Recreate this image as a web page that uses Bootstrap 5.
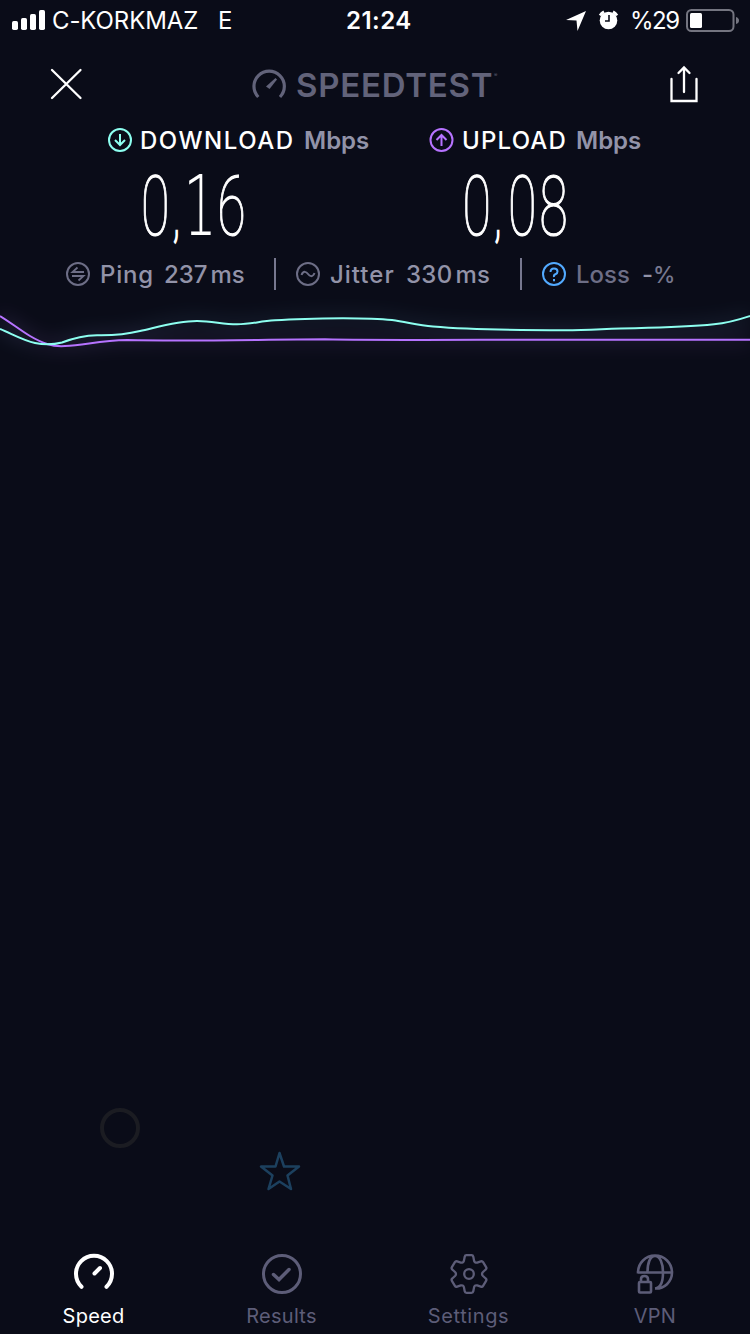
<!DOCTYPE html>
<html lang="en">
<head>
<meta charset="utf-8">
<meta name="viewport" content="width=device-width, initial-scale=1">
<title>Speedtest</title>
<link rel="stylesheet" href="https://cdn.jsdelivr.net/npm/bootstrap@5.3.0/dist/css/bootstrap.min.css">
<style>
:root{--ink:#0a0c18;--muted:#9293a8;--dim:#5d5d78;--logo:#62637a}
body{background:var(--ink);color:#fff;font-family:Inter,"Liberation Sans",sans-serif;overflow:hidden}
svg{display:block;flex:none;overflow:visible}
.screen{width:750px;height:1334px;position:relative}
.t{white-space:nowrap;flex:none;display:block}
.status{height:40px;font-size:24px;line-height:40px;padding-left:12px}
.status .t{line-height:42px}
.topbar{height:84px;padding:26px 51px 0 50px}
.readings{height:120px;padding-left:108px}
.reading{width:322px}
.lbl{font-size:24px;line-height:32px;font-weight:500}
.lbl .t{padding-top:2px}
.reading .lbl{height:32px}
.reading .lbl .t{padding-top:1px}
.unit{color:var(--muted);font-weight:600}
.digits{font-family:Roboto,sans-serif;font-weight:100;font-size:84px}
.digits .one{font-family:"DejaVu Sans",sans-serif;font-weight:200;font-size:84px}
.digits .comma{font-size:58px}
.stats{height:60px;padding-left:66px;color:var(--muted)}
.rule{width:2px;height:32px;background:#77788f;flex:none}
.tabs{height:94px;font-size:20px;line-height:24px;color:var(--dim)}
.tabs .tab{height:94px;padding-top:14px}
.tab .t{margin-top:10px;letter-spacing:.25px}
.ornament{height:840px;padding:748px 0 0 100px}
</style>
</head>
<body>
<div class="screen d-flex flex-column">
  <header class="status d-flex">
    <svg width="34" height="40" fill="#fff"><rect y="21" width="6" height="9" rx="1.7"/><rect x="9" y="18" width="6" height="12" rx="1.7"/><rect x="18" y="14" width="6" height="16" rx="1.7"/><rect x="27" y="10" width="6" height="20" rx="1.7"/></svg>
    <span class="t" style="width:171px;margin-left:6px;letter-spacing:-.1px">C-KORKMAZ</span>
    <span class="t" style="width:123px;margin-left:-6px;padding-left:1px">E</span>
    <span class="t fw-semibold" style="width:220px;margin-left:6px;letter-spacing:.5px">21:24</span>
    <svg width="64" height="40" viewBox="566 0 64 40"><path d="M566 20 586 11 577.500 31 576.500 20.500Z" fill="#fff"/><circle cx="608.500" cy="20.500" r="8.800" fill="#fff"/><path d="M600 15.500a11 11 0 0 1 4-3.700M613 11.800a11 11 0 0 1 4 3.700" fill="none" stroke="#fff" stroke-width="2.800"/><path d="M609 15v6h-4" fill="none" stroke="#0a0c18" stroke-width="1.600"/></svg>
    <span class="t" style="width:56px;letter-spacing:-1.500px">%29</span>
    <svg width="54" height="40" viewBox="686 0 54 40"><rect x="687" y="10" width="46.500" height="21" rx="4.500" fill="none" stroke="#747580" stroke-width="2"/><rect x="690" y="13" width="12" height="15" rx="1.500" fill="#fff"/><path d="M736 17q3 1 3 3.500t-3 3.500Z" fill="#747580"/></svg>
  </header>

  <nav class="topbar d-flex">
    <svg width="32" height="36" viewBox="50 66 32 36"><path d="M52 70 80.500 98M80.500 70 52 98" stroke="#fff" stroke-width="2.300" stroke-linecap="round"/></svg>
    <div class="d-flex" style="width:418px;margin-left:170px;color:var(--logo)">
      <svg width="36" height="36" viewBox="252 66 36 36" fill="none" stroke="currentColor"><path d="M258.300 97A15.200 15.200 0 1 1 280 97" stroke-width="3.200"/><path d="M266 86.500 275.500 78 277 79.500 269.500 89Z" fill="currentColor" stroke="none"/></svg>
      <span class="t" style="font-weight:600;font-size:33px;line-height:38px;margin-left:8px;letter-spacing:.75px;width:198px">SPEEDTEST</span>
      <span class="t" style="font-size:5px;line-height:18px">®</span>
    </div>
    <svg width="30" height="38" viewBox="669 66 30 38" fill="none" stroke="#fff" stroke-width="2.300"><path d="M671.500 79v22h25V79" stroke-linecap="round"/><path d="M684 92V68M678.500 73l5.500-5.500 5.500 5.500" stroke-linecap="round"/></svg>
  </nav>

  <main>
    <section class="readings d-flex">
      <div class="reading">
        <div class="lbl d-flex align-items-center">
          <svg width="24" height="24" fill="none" stroke="#8dfff0" stroke-width="2"><circle cx="12" cy="12" r="11"/><path d="M12 6v11M7 12l5 5 5-5"/></svg>
          <span class="t" style="margin-left:8px;width:164px;letter-spacing:1.5px">DOWNLOAD</span><span class="t unit">Mbps</span>
        </div>
        <svg width="140" height="84" viewBox="108 156 140 84" class="digits" fill="#fff" stroke="#fff"><text transform="translate(0 235) scale(.62 1)" stroke-width="1.200"><tspan x="227.500" y="0">0</tspan><tspan x="279" y="0" class="comma" stroke-width="2.400">,</tspan><tspan x="296" y="0" class="one" stroke-width=".1">1</tspan><tspan x="350.500" y="0">6</tspan></text></svg>
      </div>
      <div class="reading">
        <div class="lbl d-flex align-items-center">
          <svg width="24" height="24" style="margin-left:1px;margin-right:-1px" fill="none" stroke="#b673ff" stroke-width="2"><circle cx="11.500" cy="12" r="11"/><path d="M11.500 18V7M6.500 12l5-5 5 5"/></svg>
          <span class="t" style="margin-left:9px;width:114px;letter-spacing:1.2px">UPLOAD</span><span class="t unit">Mbps</span>
        </div>
        <svg width="140" height="84" viewBox="430 156 140 84" class="digits" fill="#fff" stroke="#fff"><text transform="translate(0 235) scale(.62 1)" stroke-width="1.200"><tspan x="747.500" y="0">0</tspan><tspan x="799" y="0" class="comma" stroke-width="2.400">,</tspan><tspan x="821" y="0">0</tspan><tspan x="871.500" y="0">8</tspan></text></svg>
      </div>
    </section>

    <section class="stats lbl d-flex align-items-center">
      <svg width="24" height="24" fill="none" stroke="#6d6e86" stroke-width="2"><circle cx="12" cy="12" r="11"/><path d="M18 10H6.500l5-4.500M6 14h11.500l-5 4.500" stroke-width="1.800"/></svg>
      <span class="t" style="width:64px;margin-left:10px;letter-spacing:.8px">Ping</span><span class="t" style="width:110px">237<span style="margin-left:3px">ms</span></span>
      <i class="rule"></i>
      <svg width="24" height="24" fill="none" stroke="#6d6e86" stroke-width="2" style="margin-left:20px"><circle cx="12" cy="12" r="11"/><path d="M5.500 13c2-5 5-3 6.500-1s4.500 4 6.500-1"/></svg>
      <span class="t" style="width:76px;margin-left:10px;letter-spacing:1px">Jitter</span><span class="t" style="width:114px;letter-spacing:.3px">330<span style="margin-left:3px">ms</span></span>
      <i class="rule"></i>
      <svg width="24" height="24" fill="none" stroke="#52aaff" stroke-width="2" style="margin-left:20px"><circle cx="12" cy="12" r="11"/><path d="M8.500 10q0-3.500 3.500-3.500t3.500 3q0 2-2 2.700T12 15M12 17v2.200"/></svg>
      <span class="t" style="width:66px;margin-left:10px;color:#6d6e86">Loss</span><span class="t">-<span style="color:#77788f;letter-spacing:-1px;font-size:22.500px">%</span></span>
    </section>

    <svg width="750" height="56" viewBox="0 304 750 56" fill="none" stroke-width="2">
      <defs><filter id="glow" x="-5%" y="-200%" width="110%" height="500%"><feGaussianBlur stdDeviation="9"/></filter></defs>
      <g filter="url(#glow)" opacity=".15" stroke-width="9"><path d="M0 329C25 340 33 344 51 344C70 342 75 336 98 335C145 335 145 325 190 321C220 320 220 327 260 322C300 318 350 316 390 320C420 325 430 330 562 330C700 327 727 326 750 316" stroke="#5f8fb5"/><path d="M0 316C25 333 40 347 63 346C90 345 100 340 130 340C220 341 300 339 380 340H750" stroke="#9960c0"/></g>
      <path d="M0 316C10 322 20 330 30 336C42 343 52 347 65 346C85 345 100 340.500 127 340C190 341.500 260 339.500 325 339.300C370 340.300 430 340 500 339.800H750" stroke="#b673ff"/>
      <path d="M0 329C12 334 24 341 35 343C43 344.700 53 344.800 62 342.500C71 339 81 335.500 97 335.200C113 335.500 126 334.500 140 331C158 327 177 321 197 321C213 321 222 324.300 237 324.300C251 324.300 259 321.300 275 320.300C298 318.600 320 318.300 343 318.200C363 318.300 379 318.700 392 320C407 322 417 325 433 326.500C470 329.700 515 330.300 565 330.300C592 330 610 328.500 635 328.200C666 327.500 693 326.500 714 324.300C730 322.800 738 320 750 316" stroke="#8dfff0"/>
    </svg>

    <div class="ornament d-flex">
      <svg width="200" height="84" viewBox="100 1108 200 84" fill="none"><circle cx="120" cy="1128" r="18" stroke="#1b1c22" stroke-width="4"/><path d="M279.500 1153 284 1166.500H299L287.500 1175.500 291 1189 279.500 1181.500 268.500 1189 272.500 1175.500 261 1166.500H275.500Z" stroke="#1c405e" stroke-width="2.500" stroke-linejoin="round"/></svg>
    </div>
  </main>

  <footer class="tabs d-flex position-absolute bottom-0 w-100">
    <div class="tab d-flex flex-column align-items-center text-white" style="width:187px">
      <svg width="40" height="40" fill="none" stroke="currentColor" stroke-width="4" stroke-linecap="round"><path d="M7.500 32.800A18 18 0 1 1 32.500 32.800M20.500 19.500 26 14"/></svg><span class="t">Speed</span></div>
    <div class="tab d-flex flex-column align-items-center" style="width:189px">
      <svg width="40" height="40" fill="none" stroke="currentColor" stroke-width="3"><circle cx="20" cy="20" r="18.500"/><path d="M11.500 20.500 17 25.500 27 15.500" stroke-width="3.500" stroke-linecap="round"/></svg><span class="t">Results</span></div>
    <div class="tab d-flex flex-column align-items-center" style="width:185px">
      <svg width="40" height="40" fill="none" stroke="currentColor" stroke-width="2.300" stroke-linejoin="round"><circle cx="20" cy="20" r="4.800"/><path d="M17.500 1.200h5q1.500 0 1.800 1.500l.8 4.200q.3 1 1.200 1.500t1.900.2l3.600-1.200q1.500-.5 2.300.8l3 5q.8 1.300-.4 2.300l-2.700 2.500q-1 1-1 2t1 2l2.700 2.500q1.200 1 .4 2.300l-3 5q-.8 1.300-2.300.8l-3.600-1.200q-1-.3-1.900.2t-1.200 1.500l-.8 4.200q-.3 1.500-1.800 1.500h-5q-1.500 0-1.800-1.500l-.8-4.200q-.3-1-1.200-1.500t-1.900-.2l-3.600 1.200q-1.500.5-2.300-.8l-3-5q-.8-1.300.4-2.300l2.700-2.500q1-1 1-2t-1-2l-2.700-2.500q-1.200-1-.4-2.300l3-5q.8-1.300 2.300-.8l3.600 1.200q1 .3 1.900-.2t1.200-1.500l.8-4.200q.3-1.500 1.800-1.500Z"/></svg><span class="t" style="letter-spacing:.6px">Settings</span></div>
    <div class="tab d-flex flex-column align-items-center" style="width:188px">
      <svg width="38" height="40" fill="none" stroke="currentColor" stroke-width="2.600"><path d="M2 18.500A17 17 0 0 1 36 18.500A16 16 0 0 1 19 34.500M2 19.500V18.500H36M11.500 18C11.500 9 14 2 19 2S27 9 27 18.500 24 34 19 34.500"/><rect x="3" y="28" width="12" height="10.500" rx="1"/><path d="M5 28v-3q0-3 3.500-3t3.500 3v3"/></svg><span class="t">VPN</span></div>
  </footer>
</div>
<script src="https://cdn.jsdelivr.net/npm/bootstrap@5.3.0/dist/js/bootstrap.bundle.min.js"></script>
</body>
</html>
